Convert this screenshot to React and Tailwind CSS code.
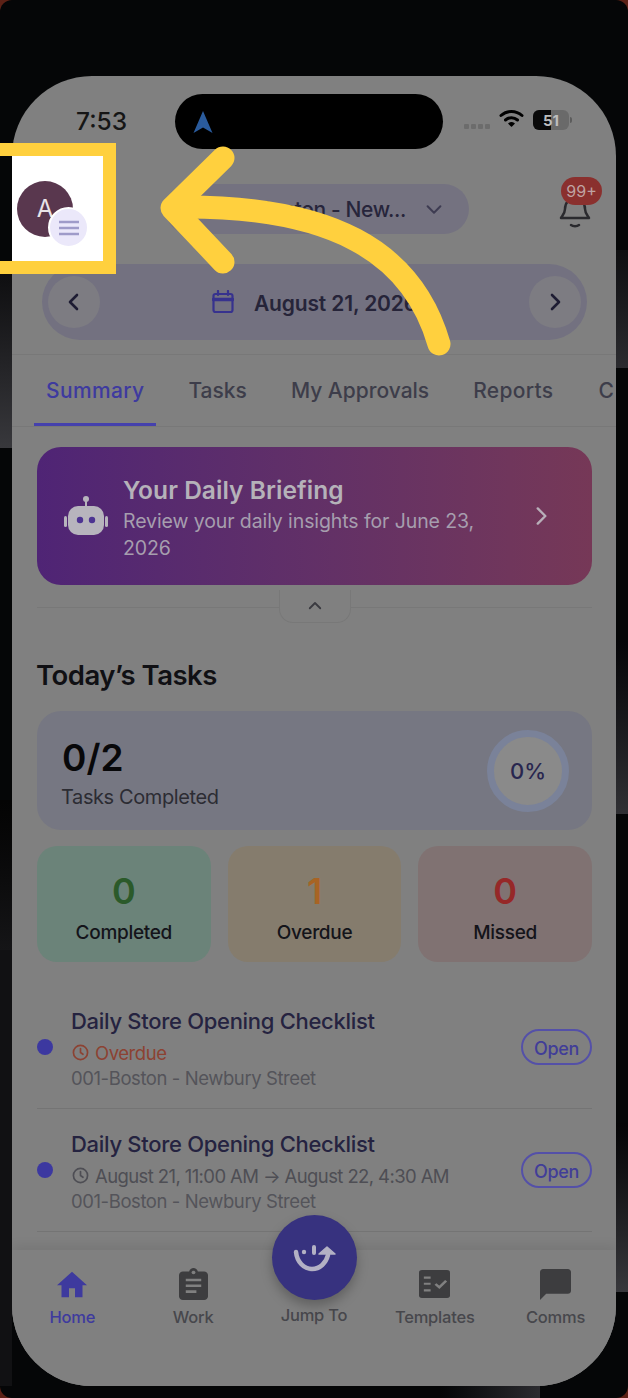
import React from "react";

const font = { fontFamily: '"Inter", "Noto Sans", sans-serif' };

function Chevron({ dir = "right", className = "", size = 24, sw = 2.6 }) {
  const d = { right: "M9 5l7 7-7 7", left: "M15 5l-7 7 7 7", down: "M5 9l7 7 7-7", up: "M5 15l7-7 7 7" }[dir];
  return (
    <svg width={size} height={size} viewBox="0 0 24 24" fill="none" stroke="currentColor" strokeWidth={sw} strokeLinecap="round" strokeLinejoin="round" className={className}>
      <path d={d} />
    </svg>
  );
}

function Clock({ className = "" }) {
  return (
    <svg width="17" height="17" viewBox="0 0 24 24" fill="none" stroke="currentColor" strokeWidth="2.4" strokeLinecap="round" strokeLinejoin="round" className={className}>
      <circle cx="12" cy="12" r="10" />
      <path d="M12 6.5V12l3.5 2.5" />
    </svg>
  );
}

function Stat({ value, label, bg, color }) {
  return (
    <div className={`flex h-[116px] flex-1 flex-col items-center rounded-[20px] pt-[23px] ${bg}`}>
      <span className={`text-[36px] leading-[44px] font-semibold ${color}`}>{value}</span>
      <span className="mt-[8px] text-[19px] leading-[24px] font-medium tracking-[-0.3px] text-[#14141a]">{label}</span>
    </div>
  );
}

function TaskRow({ when, overdue }) {
  return (
    <div className="flex h-[123px] items-center border-b border-[#747474]">
      <span className="h-4 w-4 shrink-0 rounded-full bg-[#3c38a0]" />
      <div className="ml-[18px] flex flex-1 flex-col pt-[2px]">
        <span className="text-[22px] leading-[30px] font-medium tracking-[-0.3px] text-[#252340]">Daily Store Opening Checklist</span>
        <span className={`mt-[4px] flex items-center gap-[6px] text-[18.5px] leading-[26px] ${overdue ? "tracking-[-0.45px] text-[#8c4232]" : "tracking-[-0.6px] text-[#4e4e54]"}`}>
          <Clock className="ml-[1px]" />
          {when}
        </span>
        <span className="text-[18.5px] leading-[25px] tracking-[-0.42px] text-[#54545a]">001-Boston - Newbury Street</span>
      </div>
      <span className="flex h-[36px] w-[71px] items-center justify-center rounded-full border-2 border-[#5450a8] pt-[2px] text-[18px] font-medium tracking-[-0.3px] text-[#413d98]">Open</span>
    </div>
  );
}

function NavItem({ label, active, children }) {
  return (
    <div className="flex flex-col items-center">
      <div className="flex h-[36px] items-center justify-center">{children}</div>
      <span className={`mt-[3px] text-[16.5px] leading-[24px] font-medium tracking-[-0.2px] ${active ? "text-[#3e3a9e]" : "text-[#47474c]"}`}>{label}</span>
    </div>
  );
}

const tabs = [
  { t: "Summary", c: "tracking-[0.35px] border-[#4541ad] text-[#3e3a9f]" },
  { t: "Tasks", c: "border-transparent text-[#3d3d4a]" },
  { t: "My Approvals", c: "border-transparent text-[#3d3d4a]" },
  { t: "Reports", c: "tracking-[0.3px] border-transparent text-[#3d3d4a]" },
];

export default function App() {
  return (
    <div style={font} className="relative h-[1398px] w-[628px] overflow-hidden bg-[#5c2116]">
      <div className="absolute inset-0 rounded-[12px] bg-[#050607]" />
      {/* dim wallpaper visible at the phone's edges */}
      <div className="absolute left-0 top-[270px] h-[178px] w-[12px] bg-gradient-to-b from-[#0e0e10] to-[#38383c]" />
      <div className="absolute left-0 top-[800px] h-[150px] w-[12px] bg-gradient-to-b from-[#040404] to-[#151517]" />
      <div className="absolute bottom-[12px] left-0 top-[950px] w-[12px] bg-[#111113]" />
      <div className="absolute right-0 top-[250px] h-[118px] w-[12px] bg-gradient-to-b from-[#0f0f11] to-[#2b2b2f]" />
      <div className="absolute right-0 top-[640px] h-[174px] w-[12px] bg-gradient-to-b from-[#060608] to-[#303034]" />
      <div className="absolute right-0 top-[1123px] h-[169px] w-[12px] bg-gradient-to-b from-[#050506] to-[#38383c]" />
      <div className="absolute bottom-0 left-[440px] h-[24px] w-[100px] bg-gradient-to-r from-[#050607] to-[#2c2c30]" />

      <div className="relative ml-[12px] flex h-[1310px] w-[604px] translate-y-[76px] flex-col overflow-hidden rounded-[80px] bg-[#808080]">
        {/* white spotlight behind the avatar */}
        <div className="absolute left-0 top-[80px] h-[105px] w-[91px] bg-white" />

        {/* status bar */}
        <div className="relative flex h-[73px] items-start pt-[18px]">
          <span className="ml-[64px] mt-[12px] w-[51px] text-[24.5px] leading-[30px] font-medium text-[#161616]">7:53</span>
          <div className="ml-[48px] flex h-[55px] w-[268px] items-center rounded-full bg-black pl-[17px]">
            <svg width="22" height="24" viewBox="0 0 22 24"><path d="M11 1l9.500 22-9.500-5.500L1.500 23z" fill="#2a5b9c" /></svg>
          </div>
          <div className="ml-[21px] mt-[30px] flex gap-[2px]">
            {[0, 1, 2, 3].map((i) => <span key={i} className="h-[5px] w-[5px] rounded-[1px] bg-[#6c6c6c]" />)}
          </div>
          <svg className="ml-[9px] mt-[15px]" width="25" height="19" viewBox="0 0 25 19" fill="none" stroke="#000" strokeWidth="3" strokeLinecap="round">
            <path d="M2 6.500c6-5.500 15-5.500 21 0" />
            <path d="M6.500 11c3.500-3 8.500-3 12 0" />
            <path d="M12.500 17l-2.500-2.500c1.500-1 3.500-1 5 0z" fill="#000" strokeWidth="1.500" strokeLinejoin="round" />
          </svg>
          <div className="relative ml-[9px] mt-[16px] flex h-[20px] w-[36px] items-center justify-center overflow-hidden rounded-[6px] bg-[#6a6a6a]">
            <div className="absolute inset-y-0 left-0 w-[18px] bg-[#0a0a0a]" />
            <span className="relative text-[15px] leading-none font-bold text-[#bdbdbd]">51</span>
          </div>
          <span className="ml-[1px] mt-[23px] h-[6px] w-[2px] rounded-r-full bg-[#5c5c5c]" />
        </div>

        {/* header */}
        <div className="relative mt-[35px] flex h-[50px] items-center">
          <div className="relative ml-[5px] flex h-[56px] w-[56px] items-center justify-center rounded-full bg-[#59374e] text-[24px] text-[#e9e4e8]">
            A
            <div className="absolute left-[31px] top-[26px] flex h-[41px] w-[41px] items-center justify-center rounded-full border-2 border-white bg-[#ebe8fa]">
              <svg width="20" height="16" viewBox="0 0 20 16" stroke="#9f9bc9" strokeWidth="2.600"><path d="M0 2h20M0 8h20M0 14h20" /></svg>
            </div>
          </div>
          <div className="ml-[92px] flex h-[50px] w-[304px] items-center justify-end rounded-full bg-[#747280] pr-[24px]">
            <span className="pt-[2px] text-[21px] font-medium tracking-[-0.4px] text-[#27253b]">001-Boston - New...</span>
            <Chevron dir="down" size={22} sw={2.2} className="ml-[17px] text-[#3e3c52]" />
          </div>
          <div className="relative ml-[88px] flex h-[40px] w-[36px] items-center justify-center">
            <svg width="34" height="36" viewBox="0 0 34 36" fill="none" stroke="#2a2a2e" strokeWidth="2.500" strokeLinecap="round" strokeLinejoin="round" className="mt-[4px]">
              <path d="M7 16c0-6 4-11 10-11s10 5 10 11c0 4 2 6 4 9H3c2-3 4-5 4-9z" />
              <path d="M13 32c2 1.500 6 1.500 8 0" />
            </svg>
            <span className="absolute -top-[12px] left-[4px] flex h-[28px] w-[41px] items-center justify-center rounded-full bg-[#8a302e] text-[16px] text-[#bfa3a2]">99+</span>
          </div>
        </div>

        {/* date switcher */}
        <div className="ml-[30px] mt-[30px] flex h-[76px] w-[545px] items-center justify-between rounded-full bg-[#737180] px-[6px]">
          <div className="flex h-[52px] w-[52px] items-center justify-center rounded-full bg-[#7d7c82]">
            <Chevron dir="left" className="text-[#1e1c33]" />
          </div>
          <div className="flex items-center gap-[20px]">
            <svg width="22" height="24" viewBox="0 0 22 24" fill="none" stroke="#37328e" strokeWidth="2.200" strokeLinecap="round">
              <rect x="1.500" y="4" width="19" height="18" rx="2" />
              <path d="M1.500 9.500h19" strokeWidth="3.500" />
              <path d="M6 1v4M16 1v4" />
            </svg>
            <span className="pt-[3px] text-[21px] font-semibold tracking-[-0.15px] text-[#262439]">August 21, 2026</span>
          </div>
          <div className="flex h-[52px] w-[52px] items-center justify-center rounded-full bg-[#7d7c82]">
            <Chevron dir="right" className="text-[#1e1c33]" />
          </div>
        </div>

        {/* tabs */}
        <div className="mt-[14px] flex h-[73px] overflow-hidden border-y border-[#787878] pl-[22px]">
          {tabs.map(({ t, c }) => (
            <div key={t} className={`mr-[20px] flex shrink-0 items-center border-b-[3px] px-[12px] pt-[4px] text-[21px] font-medium ${c}`}>{t}</div>
          ))}
          <div className="ml-[13px] flex shrink-0 items-center pb-[3px] pt-[4px] text-[21px] font-medium text-[#3d3d4a]">C</div>
        </div>

        {/* scroll area */}
        <div className="flex min-h-0 flex-1 flex-col overflow-hidden pl-[25px] pr-[24px]">
          <div className="mt-[20px] flex h-[138px] shrink-0 items-center rounded-[24px] bg-gradient-to-r from-[#4f2475] to-[#763857] pl-[27px] pr-[38px]">
            <svg width="44" height="40" viewBox="0 0 44 40" fill="#b7b4bd" className="shrink-0">
              <circle cx="22" cy="3" r="3" />
              <rect x="21" y="4" width="2" height="7" />
              <rect x="4" y="10" width="36" height="29" rx="10" />
              <rect x="0" y="20" width="3" height="11" rx="1.500" />
              <rect x="41" y="20" width="3" height="11" rx="1.500" />
              <circle cx="16" cy="24" r="3.200" fill="#4d3392" />
              <circle cx="28" cy="24" r="3.200" fill="#4d3392" />
            </svg>
            <div className="ml-[15px] w-[370px] pt-[3px]">
              <div className="text-[24.500px] leading-[32px] font-semibold tracking-[0.05px] text-[#b5b2b9]">Your Daily Briefing</div>
              <div className="mt-[2px] text-[19.500px] leading-[27px] tracking-[-0.1px] text-[#a69eae]">Review your daily insights for June 23, 2026</div>
            </div>
            <Chevron dir="right" size={26} sw={2.2} className="ml-auto text-[#b8afb9]" />
          </div>

          {/* collapse handle on divider */}
          <div className="relative h-[38px] shrink-0">
            <div className="absolute inset-x-0 top-[22px] border-t border-[#787878]" />
            <div className="absolute left-[242px] top-[5px] flex h-[33px] w-[72px] items-center justify-center rounded-b-[14px] border border-t-0 border-[#787878] bg-[#808080]">
              <Chevron dir="up" size={18} sw={2.4} className="text-[#3a3a40]" />
            </div>
          </div>

          <h2 className="-ml-px mt-[35px] shrink-0 text-[27.500px] leading-[34px] font-semibold tracking-[-0.5px] text-[#101014]">Today’s Tasks</h2>

          <div className="mt-[19px] flex h-[119px] shrink-0 items-center justify-between rounded-[24px] bg-[#767782] pl-[25px] pr-[23px]">
            <div className="flex flex-col pt-[4px]">
              <span className="text-[37px] leading-[46px] font-semibold text-[#08080a]">0/2</span>
              <span className="-ml-px mt-[3px] text-[20px] leading-[26px] tracking-[-0.4px] text-[#2c2c33]">Tasks Completed</span>
            </div>
            <div className="flex h-[82px] w-[82px] items-center justify-center rounded-full border-[7px] border-[#7a8299] bg-[#8a8a8a] pt-[2px] text-[22px] font-medium text-[#28264f]">0%</div>
          </div>

          <div className="mt-[16px] flex shrink-0 gap-[17px]">
            <Stat value="0" label="Completed" bg="bg-[#6b8379]" color="text-[#2b5a2a]" />
            <Stat value="1" label="Overdue" bg="bg-[#857c6d]" color="text-[#a86424]" />
            <Stat value="0" label="Missed" bg="bg-[#807272]" color="text-[#962828]" />
          </div>

          <div className="mt-[24px] shrink-0">
            <TaskRow overdue when="Overdue" />
            <TaskRow when="August 21, 11:00 AM → August 22, 4:30 AM" />
          </div>
        </div>

        {/* bottom nav */}
        <div className="relative grid h-[136px] shrink-0 grid-cols-5 bg-[#808080] pt-[16px] shadow-[0_-5px_10px_rgba(0,0,0,0.07)]">
          <NavItem label="Home" active>
            <svg width="30" height="27" viewBox="2 3 20 17" fill="#3e3a9e"><path d="M10 20v-6h4v6h5v-8h3L12 3 2 12h3v8z" /></svg>
          </NavItem>
          <NavItem label="Work">
            <svg width="29" height="32" viewBox="0 0 30 36" fill="#3d3d3f" preserveAspectRatio="none">
              <path d="M4 4h6.500C11 1.500 13 0 15 0s4 1.500 4.500 4H26c2 0 4 2 4 4v24c0 2-2 4-4 4H4c-2 0-4-2-4-4V8c0-2 2-4 4-4z" />
              <circle cx="15" cy="5" r="2" fill="#808080" />
              <path d="M7 12h16v3H7zM7 18.500h16v3H7zM7 25h11v3H7z" fill="#808080" />
            </svg>
          </NavItem>
          <div className="flex flex-col items-center">
            <div className="h-[36px]" />
            <span className="mt-[1px] text-[16.500px] leading-[24px] font-medium tracking-[-0.2px] text-[#47474c]">Jump To</span>
          </div>
          <NavItem label="Templates">
            <svg width="31" height="28" viewBox="0 0 32 34" preserveAspectRatio="none">
              <rect width="32" height="34" rx="3" fill="#3d3d3f" />
              <path d="M5 8h7v2.500H5zM5 15.500h7V18H5zM5 23.500h7V26H5z" fill="#808080" />
              <path d="M17 17l4 4 7-8" fill="none" stroke="#808080" strokeWidth="2.800" />
            </svg>
          </NavItem>
          <NavItem label="Comms">
            <svg width="31" height="31" viewBox="2 2 20 20" fill="#3d3d3f"><path d="M20 2H4c-1.100 0-2 .9-2 2v18l4-4h14c1.100 0 2-.9 2-2V4c0-1.100-.9-2-2-2z" /></svg>
          </NavItem>

          <div className="absolute left-[260px] top-[-35px] flex h-[85px] w-[85px] items-center justify-center rounded-full bg-[#37327f] shadow-[0_6px_12px_rgba(0,0,0,0.25)]">
            <svg width="46" height="28" viewBox="0 0 46 28" fill="none" stroke="#b3b1c4" strokeWidth="4.500" strokeLinecap="round" strokeLinejoin="round">
              <path d="M4 8c1 10 8 17 16 17 8 0 14-6 16-14" />
              <path d="M35 3l-8 7h16z" fill="#b3b1c4" stroke="#b3b1c4" strokeWidth="1.500" />
              <path d="M22 3v6" strokeWidth="4" />
              <circle cx="12" cy="8" r="2.200" fill="#b3b1c4" stroke="none" />
            </svg>
          </div>
        </div>
      </div>

      {/* yellow highlight frame */}
      <div className="absolute left-[-20px] top-[143px] h-[131px] w-[136px] border-[13px] border-[#ffd03e]" />

      {/* yellow arrow */}
      <svg className="pointer-events-none absolute inset-0" width="628" height="1398" fill="none" stroke="#ffd03e" strokeWidth="23" strokeLinecap="round" strokeLinejoin="round">
        <path d="M439 344C412 250 330 205 176 207" />
        <path d="M223 158L172 208L223 262" />
      </svg>
    </div>
  );
}
